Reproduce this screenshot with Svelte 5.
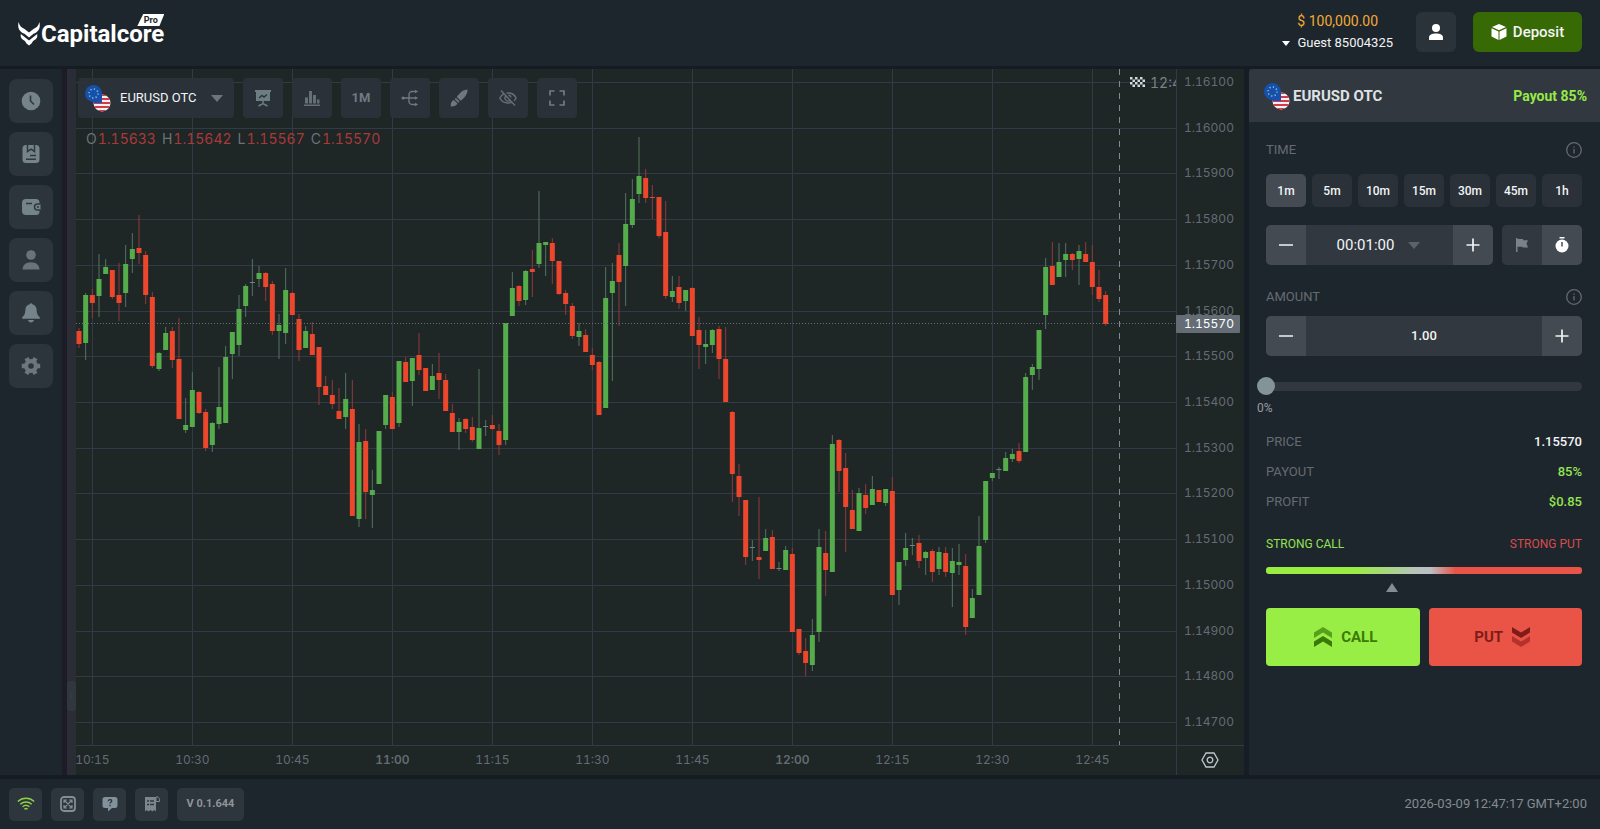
<!-- Trading terminal: chart, tools and order panel -->
<script lang="ts">
    type Candle = [high: number, open: number, close: number, low: number];

    // One candle per minute from 10:13, each value measured down the price scale
    const candles: Candle[] = [
        [328, 331, 344, 348], [293, 343, 295, 360], [289, 295, 303, 318], [254, 296, 279, 317], [259, 274, 267, 274],
        [270, 270, 297, 299], [263, 295, 303, 321], [245, 293, 264, 307], [233, 259, 249, 273], [215, 248, 253, 264],
        [251, 255, 295, 304], [292, 297, 366, 368], [352, 369, 353, 371], [327, 350, 333, 350], [327, 331, 360, 368],
        [318, 359, 419, 419], [398, 430, 425, 433], [372, 427, 390, 427], [391, 392, 413, 414], [409, 412, 448, 451],
        [422, 445, 423, 452], [367, 424, 407, 429], [346, 423, 357, 423], [332, 354, 332, 379], [295, 345, 309, 356],
        [284, 306, 286, 317], [259, 283, 282, 296], [266, 279, 273, 287], [272, 273, 287, 301], [281, 284, 331, 335],
        [314, 331, 325, 359], [268, 333, 290, 344], [292, 293, 315, 315], [314, 319, 350, 361], [326, 348, 331, 348],
        [322, 334, 355, 355], [347, 347, 387, 405], [376, 386, 395, 395], [380, 395, 404, 409], [388, 411, 419, 419],
        [373, 417, 399, 429], [380, 409, 516, 516], [424, 519, 442, 527], [429, 441, 492, 519], [470, 495, 490, 528],
        [431, 484, 431, 484], [395, 425, 395, 429], [392, 397, 429, 429], [361, 423, 361, 427], [357, 362, 382, 382],
        [358, 381, 358, 406], [333, 355, 370, 375], [368, 368, 391, 391], [364, 390, 376, 390], [353, 373, 380, 399],
        [374, 380, 411, 411], [404, 413, 432, 432], [418, 432, 422, 450], [418, 419, 429, 433], [417, 427, 440, 442],
        [369, 449, 428, 449], [420, 427, 426, 436], [415, 425, 429, 430], [424, 431, 445, 455], [323, 440, 323, 445],
        [272, 316, 288, 316], [285, 286, 301, 306], [270, 300, 271, 305], [250, 269, 272, 297], [191, 264, 243, 268],
        [242, 245, 242, 276], [238, 243, 261, 284], [261, 261, 294, 295], [290, 293, 304, 315], [303, 306, 336, 339],
        [323, 337, 331, 346], [329, 335, 352, 352], [348, 355, 365, 370], [361, 362, 415, 415], [267, 408, 298, 408],
        [263, 293, 281, 381], [243, 255, 282, 326], [193, 266, 224, 306], [179, 225, 199, 228], [137, 194, 176, 203],
        [169, 178, 198, 203], [185, 197, 198, 219], [197, 197, 236, 238], [201, 232, 296, 299], [276, 297, 291, 302],
        [276, 287, 303, 309], [290, 301, 290, 311], [287, 288, 336, 336], [317, 330, 345, 369], [330, 347, 344, 364],
        [329, 345, 330, 353], [326, 329, 359, 379], [327, 359, 402, 402], [411, 412, 474, 502], [464, 476, 497, 516],
        [500, 500, 557, 565], [540, 548, 547, 561], [497, 557, 560, 579], [529, 551, 538, 551], [530, 537, 569, 569],
        [562, 569, 568, 571], [546, 570, 550, 570], [548, 554, 632, 632], [629, 629, 653, 655], [638, 651, 663, 676],
        [619, 665, 635, 671], [529, 632, 547, 642], [531, 553, 570, 596], [435, 572, 444, 572], [439, 440, 471, 492],
        [453, 468, 507, 552], [490, 510, 529, 529], [488, 531, 493, 531], [484, 495, 508, 514], [476, 505, 489, 505],
        [490, 490, 502, 502], [489, 503, 489, 506], [477, 491, 595, 595], [562, 590, 562, 605], [533, 560, 548, 566],
        [538, 546, 545, 555], [535, 543, 561, 568], [551, 558, 552, 575], [549, 551, 572, 582], [547, 569, 552, 575],
        [547, 553, 572, 577], [548, 573, 561, 607], [544, 565, 562, 575], [554, 566, 627, 635], [589, 618, 598, 618],
        [516, 595, 546, 595], [481, 540, 481, 543], [473, 478, 473, 481], [467, 470, 469, 479], [452, 471, 458, 471],
        [449, 459, 454, 462], [443, 451, 461, 463], [373, 452, 377, 452], [364, 375, 367, 390], [330, 369, 330, 380],
        [258, 315, 267, 329], [242, 266, 285, 285], [243, 277, 262, 277], [243, 260, 254, 277], [253, 254, 260, 270],
        [245, 259, 251, 285], [242, 254, 262, 262], [245, 262, 287, 295], [270, 287, 299, 302], [291, 295, 324, 326]
    ];

    const prices = Array.from({ length: 15 }, (_, i) => ({
        label: (1.161 - i * 0.001).toFixed(5),
        level: 82 + (i * 640) / 14
    }));

    const hours = ['10:15', '10:30', '10:45', '11:00', '11:15', '11:30', '11:45', '12:00', '12:15', '12:30', '12:45'];
    const durations = ['1m', '5m', '10m', '15m', '30m', '45m', '1h'];
    const ohlc = [['O', '1.15633'], ['H', '1.15642'], ['L', '1.15567'], ['C', '1.15570']];

    const AXIS_WIDTH = 68;
    const AXIS_HEIGHT = 30;
    const STEP = 20 / 3;

    let width = $state(1168);
    let height = $state(706);
    let duration = $state('1m');
    let time = $state('00:01:00');
    let amount = $state('1.00');
    let percent = $state(0);
    let mode = $state('timer');

    let plotWidth = $derived(width - AXIS_WIDTH);
    let plotHeight = $derived(height - AXIS_HEIGHT);

    // The newest candle stays at a fixed distance from the price axis
    const x = (index: number) => plotWidth - 1097 + index * STEP;
    const y = (level: number) => ((level - 69) * plotHeight) / 676;

    function changeAmount(delta: number) {
        amount = Math.max(1, Number(amount) + delta).toFixed(2);
    }

    function changeTime(delta: number) {
        const [h, m] = time.split(':').map(Number);
        const total = Math.max(1, h * 60 + m + delta);
        const pad = (n: number) => String(n).padStart(2, '0');
        time = `${pad(Math.floor(total / 60))}:${pad(total % 60)}:00`;
    }
</script>

{#snippet flags()}
    <svg class="flags" viewBox="0 0 28 28" width="28" height="28" aria-hidden="true">
        <clipPath id="us"><circle cx="18" cy="19" r="8.5" /></clipPath>
        <g clip-path="url(#us)">
            <rect x="9" y="10" width="18" height="18" fill="#eef0f2" />
            {#each [10, 14, 18, 22, 26] as top}
                <rect x="9" y={top} width="18" height="2" fill="#d23a48" />
            {/each}
            <rect x="9" y="10" width="9" height="9" fill="#1c4fb0" />
        </g>
        <circle cx="9.5" cy="9.5" r="8.5" fill="#1550ad" />
        <circle cx="9.5" cy="9.5" r="4.5" fill="none" stroke="#9cc4b8" stroke-width="1.5" stroke-dasharray="1.2 2.3" />
    </svg>
{/snippet}

{#snippet info()}
    <svg viewBox="0 0 16 16" width="16" height="16" fill="none" stroke="#646a71" stroke-width="1.3">
        <circle cx="8" cy="8" r="7.3" />
        <path d="M8 7v4.500M8 4.400v1.300" />
    </svg>
{/snippet}

{#snippet minus()}
    <svg viewBox="0 0 14 14" width="14" height="14" stroke="#f2f4f5" stroke-width="1.7"><path d="M0 7h14" /></svg>
{/snippet}

{#snippet plus()}
    <svg viewBox="0 0 14 14" width="14" height="14" stroke="#f2f4f5" stroke-width="1.7"><path d="M.5 7h13M7 .5v13" /></svg>
{/snippet}

<div class="app">
    <header class="topbar">
        <a class="logo" href="/" aria-label="Capitalcore Pro">
            <svg viewBox="0 0 22 24" width="22" height="24" fill="#fff" aria-hidden="true">
                <path d="M.6 0C-.8 6 1.500 10 6.500 11.800L11 15.600l4.500-3.800C20.500 10 22.800 6 21.400 0c-.8 4-3 5.800-5.600 6.700L11 10.600 6.200 6.700C3.600 5.800 1.400 4 .6 0z" />
                <path d="M2.800 12L11 18.500 19.200 12c.4 2.300-.2 4.300-1.500 5.300l-2.600 1.600-1.600 2.700L11 23.500l-2.500-1.900-1.600-2.700-2.600-1.600C3 16.300 2.400 14.300 2.800 12z" />
            </svg>
            <span class="brand">Capitalcore</span>
            <span class="pro">Pro</span>
        </a>
        <div class="account">
            <button class="balance">
                <span class="money">$ 100,000.00</span>
                <span class="guest">
                    <svg viewBox="0 0 8 5" width="8" height="5" fill="#fff"><path d="M0 0h8L4 5z" /></svg>
                    Guest 85004325
                </span>
            </button>
            <button class="profile" aria-label="Profile">
                <svg viewBox="0 0 14 16" width="14" height="16" fill="#fff">
                    <circle cx="7" cy="4" r="4" />
                    <path d="M0 16v-2.500C0 11 3 9.600 7 9.600s7 1.400 7 3.900V16z" />
                </svg>
            </button>
            <button class="deposit">
                <svg viewBox="0 0 16 16" width="16" height="16" fill="#fff">
                    <path d="M8 0l7 3-7 3.200L1 3zM.5 4.200l7 3.200V16l-7-3.400zM15.500 4.200l-7 3.200V16l7-3.400z" />
                </svg>
                Deposit
            </button>
        </div>
    </header>

    <div class="workspace">
        <nav class="rail" aria-label="Main">
            <button aria-label="History">
                <svg viewBox="0 0 20 20" width="20" height="20">
                    <circle cx="10" cy="10" r="9.3" fill="#75838a" />
                    <path d="M9.500 4.500V10l3.500 3.500" fill="none" stroke="#30383f" stroke-width="1.6" />
                </svg>
            </button>
            <button aria-label="Orders">
                <svg viewBox="0 0 20 20" width="20" height="20">
                    <path d="M5 1h10a3.500 3.500 0 013.500 3.500v11A3.500 3.500 0 0115 19H5a3.500 3.500 0 01-3.500-3.500v-11A3.500 3.500 0 015 1z" fill="#75838a" />
                    <path d="M6.500 0v7.500L10 5.200l3.500 2.300V0M9 11.500h6M5 15.300h10" fill="none" stroke="#30383f" stroke-width="1.5" />
                </svg>
            </button>
            <button aria-label="Wallet">
                <svg viewBox="0 0 20 20" width="20" height="20">
                    <path d="M5 2h10a3.500 3.500 0 013.500 3.500v9A3.500 3.500 0 0115 18H5a4 4 0 01-4-4V6a4 4 0 014-4z" fill="#75838a" />
                    <path d="M5 6.500h6" stroke="#30383f" stroke-width="1.5" />
                    <path d="M19.500 7h-3a3 3 0 000 6h3" fill="#75838a" stroke="#30383f" stroke-width="1.5" />
                    <circle cx="17" cy="10" r="1" fill="#30383f" />
                </svg>
            </button>
            <button aria-label="Account">
                <svg viewBox="0 0 20 20" width="20" height="20" fill="#69737b">
                    <circle cx="10" cy="5" r="4.8" />
                    <path d="M1.500 19.500c0-4.500 3.500-7.300 8.500-7.300s8.500 2.800 8.500 7.300z" />
                </svg>
            </button>
            <button aria-label="Notifications">
                <svg viewBox="0 0 20 20" width="20" height="20" fill="#75838a">
                    <path d="M8.700 1.200a1.400 1.400 0 012.600 0c2.700.6 4.300 2.600 4.300 5.500 0 4 1.500 6 3.200 7.600v1.500H1.200v-1.500c1.700-1.600 3.200-3.600 3.200-7.600 0-2.900 1.600-4.900 4.300-5.500zM7 17h6c-.4 1.500-1.500 2.500-3 2.500S7.400 18.500 7 17z" />
                </svg>
            </button>
            <button aria-label="Settings">
                <svg viewBox="0 0 20 20" width="20" height="20" fill="none" stroke="#6d767d">
                    <circle cx="10" cy="10" r="4.9" stroke-width="4.2" />
                    <path d="M19.200 10H15M14.600 17.970l-2.100-3.640M5.400 17.970l2.100-3.640M.8 10H5M5.400 2.030l2.100 3.640M14.600 2.030l-2.100 3.640" stroke-width="4.4" />
                </svg>
            </button>
        </nav>

        <div class="divider">
            <button class="handle" aria-label="Expand panel">›</button>
        </div>

        <main class="chart" bind:clientWidth={width} bind:clientHeight={height}>
            <svg class="plot" {width} {height} role="img" aria-label="EURUSD OTC one minute chart">
                <clipPath id="plot-area"><rect width={plotWidth} height={plotHeight} /></clipPath>
                <clipPath id="time-area"><rect width={plotWidth} {height} /></clipPath>

                <g clip-path="url(#plot-area)">
                    {#each prices as price}
                        <line class="grid" x1="0" x2={plotWidth} y1={Math.round(y(price.level)) + 0.5} y2={Math.round(y(price.level)) + 0.5} />
                    {/each}
                    {#each hours as hour, i}
                        <line class="grid" x1={Math.round(x(2 + i * 15)) + 0.5} x2={Math.round(x(2 + i * 15)) + 0.5} y1="0" y2={plotHeight} />
                    {/each}
                    {#each candles as [high, open, close, low], i}
                        {@const up = close < open}
                        <line class={up ? 'wick-up' : 'wick-down'} x1={x(i)} x2={x(i)} y1={y(high)} y2={y(low)} />
                        <rect
                            class={Math.abs(open - close) === 1 && up ? 'doji' : up ? 'up' : 'down'}
                            x={x(i) - 2.5}
                            y={y(Math.min(open, close))}
                            width="5"
                            height={Math.max(1, Math.abs(y(open) - y(close)))}
                        />
                    {/each}
                    <line class="last" x1="0" x2={plotWidth} y1={y(324) - 0.5} y2={y(324) - 0.5} />
                    <line class="expiry" x1={x(156) + 0.5} x2={x(156) + 0.5} y1="0" y2={plotHeight} />
                    <g transform="translate({x(156) + 11} 8)">
                        <path d="M0 0l4 1 5-1 6 1v9l-5-1-5 1-5-1z" fill="#20282a" />
                        {#each [0, 1, 2, 3] as row}
                            {#each [0, 1, 2] as col}
                                <rect x={col * 5 + (row % 2) * 2.5} y={row * 2.5} width="2.5" height="2.5" fill="#d5d8da" />
                            {/each}
                        {/each}
                    </g>
                    <text class="expiry-label" x={x(156) + 31} y="19">12:48</text>
                </g>

                <path class="axis" d="M0 {plotHeight + 0.5}H{width}M{plotWidth + 0.5} 0V{height}" />

                {#each prices as price}
                    <text class="label" x={plotWidth + 8} y={y(price.level) + 4}>{price.label}</text>
                {/each}
                <g clip-path="url(#time-area)">
                    {#each hours as hour, i}
                        <text class="label hour" class:strong={hour.endsWith('00')} x={x(2 + i * 15)} y={plotHeight + 19}>{hour}</text>
                    {/each}
                </g>

                <rect x={plotWidth} y={y(324) - 9} width="64" height="18" rx="1" fill="#646d75" />
                <text class="label current" x={plotWidth + 8} y={y(324) + 4}>1.15570</text>

                <g transform="translate({plotWidth + 34} {plotHeight + 15})" fill="none" stroke="#c3c7ca" stroke-width="1.3">
                    <path d="M-4 -7h8l4 7-4 7h-8l-4-7z" />
                    <circle r="2.8" />
                </g>
            </svg>

            <div class="overlay">
                <div class="toolbar">
                    <button class="symbol">
                        {@render flags()}
                        <span>EURUSD OTC</span>
                        <svg viewBox="0 0 12 7" width="12" height="7" fill="#6c757c"><path d="M0 0h12L6 7z" /></svg>
                    </button>
                    <button aria-label="Indicators">
                        <svg viewBox="0 0 18 18" width="18" height="18">
                            <path d="M1 1h16v2h-1v9H2V3H1z" fill="#6c7e82" />
                            <path d="M5 9l3-2.500L10 8l3-2.500" fill="none" stroke="#2b333a" stroke-width="1.4" />
                            <path d="M9 12v3M4.500 17L9 14.500l4.500 2.500" fill="none" stroke="#6c7e82" stroke-width="1.5" />
                        </svg>
                    </button>
                    <button aria-label="Chart type">
                        <svg viewBox="0 0 16 16" width="16" height="16" fill="#656f76">
                            <path d="M0 14.500h16V16H0zM1 7.500h3v6H1zM5 1h3v12.500H5zM9 5h3v8.500H9zM13 9.500h2.500v4H13z" />
                        </svg>
                    </button>
                    <button class="interval">1M</button>
                    <button aria-label="Compare">
                        <svg viewBox="0 0 18 18" width="18" height="18" fill="none" stroke="#6f787e" stroke-width="1.4">
                            <path d="M2 9h13M15 2.500h-4a3 3 0 00-3 3v7a3 3 0 003 3h4" />
                            <path d="M.5 9a1.600 1.600 0 103.200 0A1.600 1.600 0 00.5 9M14 .7l3.200 1.800L14 4.300zM14 7.200L17.200 9 14 10.800zM14 13.700l3.200 1.800-3.200 1.800z" fill="#6f787e" stroke="none" />
                        </svg>
                    </button>
                    <button aria-label="Draw">
                        <svg viewBox="0 0 18 18" width="18" height="18" fill="#6f787e">
                            <path d="M17.500.5c.3 4.500-3 8.500-7 11.200L6.800 8C9.500 4 13 .6 17.500.5zM6 8.900l3.600 3.600-1.300 1.300-3.700-3.700zM3.900 11l3.600 3.600c-.8 2.300-3.600 3-6.800 2.900C.6 14.300 1.300 12 3.900 11z" />
                        </svg>
                    </button>
                    <button aria-label="Hide drawings">
                        <svg viewBox="0 0 18 18" width="18" height="18" fill="none" stroke="#667076" stroke-width="1.4">
                            <path d="M5.200 4.600C3.200 5.700 1.700 7.300.8 9c1.600 3.100 4.600 5 8.200 5 1.200 0 2.400-.2 3.500-.7M7.400 4.100C11.600 3.400 15.400 5.600 17.200 9c-.5 1-1.200 1.900-2.100 2.700M6.600 7.200A3 3 0 0010.800 11.400M9.500 6c1.400.3 2.300 1.200 2.500 2.500M2 1.500l14 15" />
                        </svg>
                    </button>
                    <button aria-label="Full screen">
                        <svg viewBox="0 0 16 16" width="16" height="16" fill="none" stroke="#727b81" stroke-width="1.7">
                            <path d="M1 5.500V1h4.500M10.500 1H15v4.500M15 10.500V15h-4.500M5.500 15H1v-4.500" />
                        </svg>
                    </button>
                </div>
                <div class="ohlc">
                    {#each ohlc as [name, value]}
                        <span>{name}<b>{value}</b></span>
                    {/each}
                </div>
            </div>
        </main>

        <aside class="panel">
            <div class="panel-head">
                {@render flags()}
                <h2>EURUSD OTC</h2>
                <span class="payout">Payout 85%</span>
            </div>
            <div class="panel-body">
                <div class="caption">
                    <label for="time">TIME</label>
                    {@render info()}
                </div>
                <div class="durations">
                    {#each durations as item}
                        <button class:active={duration === item} onclick={() => (duration = item)}>{item}</button>
                    {/each}
                </div>
                <div class="time-row">
                    <div class="stepper">
                        <button aria-label="Less time" onclick={() => changeTime(-1)}>{@render minus()}</button>
                        <div class="time-value">
                            <input id="time" type="text" bind:value={time} />
                            <svg viewBox="0 0 12 7" width="12" height="7" fill="#5b6369"><path d="M0 0h12L6 7z" /></svg>
                        </div>
                        <button aria-label="More time" onclick={() => changeTime(1)}>{@render plus()}</button>
                    </div>
                    <div class="stepper mode">
                        <button class:off={mode !== 'flag'} aria-label="Fixed time" onclick={() => (mode = 'flag')}>
                            <svg viewBox="0 0 12 14" width="12" height="14" fill="#7b8288">
                                <path d="M0 0h1.500v14H0zM1.500 1H7v1.200h5L10.500 5.600 12 9.500H6.500V8.700h-5z" />
                            </svg>
                        </button>
                        <button class:off={mode !== 'timer'} aria-label="Timer" onclick={() => (mode = 'timer')}>
                            <svg viewBox="0 0 14 16" width="14" height="16">
                                <path d="M4.500 0h5v1.500h-5z" fill="#fff" />
                                <circle cx="7" cy="9" r="6.5" fill="#fff" />
                                <path d="M7 5v4.500" stroke="#454d54" stroke-width="1.5" />
                            </svg>
                        </button>
                    </div>
                </div>
                <div class="caption amount">
                    <label for="amount">AMOUNT</label>
                    {@render info()}
                </div>
                <div class="stepper">
                    <button aria-label="Lower amount" onclick={() => changeAmount(-1)}>{@render minus()}</button>
                    <input id="amount" type="text" bind:value={amount} />
                    <button aria-label="Raise amount" onclick={() => changeAmount(1)}>{@render plus()}</button>
                </div>
                <div class="slider">
                    <input id="percent" type="range" min="0" max="100" bind:value={percent} />
                    <label for="percent">{percent}%</label>
                </div>
                <dl>
                    <div><dt>PRICE</dt><dd class="white">1.15570</dd></div>
                    <div><dt>PAYOUT</dt><dd>85%</dd></div>
                    <div><dt>PROFIT</dt><dd>$0.85</dd></div>
                </dl>
                <div class="signal">
                    <span class="call-text">STRONG CALL</span>
                    <span class="put-text">STRONG PUT</span>
                </div>
                <div class="meter"></div>
                <div class="pointer" style="padding-left: 40%">
                    <svg viewBox="0 0 12 9" width="12" height="9" fill="#858c93"><path d="M6 0l6 9H0z" /></svg>
                </div>
                <div class="actions">
                    <button class="call">
                        <svg viewBox="0 0 18 20" width="18" height="20">
                            <path d="M9 0l9 5.500V11L9 5.500 0 11V5.500z" fill="#58a01b" />
                            <path d="M9 9l9 5.500V20l-9-5.500L0 20v-5.500z" fill="#3c7a08" />
                        </svg>
                        CALL
                    </button>
                    <button class="put">
                        PUT
                        <svg viewBox="0 0 18 20" width="18" height="20">
                            <path d="M9 20l9-5.500V9l-9 5.500L0 9v5.500z" fill="#b5322c" />
                            <path d="M9 11l9-5.500V0L9 5.500 0 0v5.500z" fill="#7f1c19" />
                        </svg>
                    </button>
                </div>
            </div>
        </aside>
    </div>

    <footer class="statusbar">
        <button aria-label="Connection">
            <svg viewBox="0 0 18 14" width="18" height="14" fill="none" stroke="#8fd24a" stroke-width="1.4">
                <path d="M.8 4.500C5.500.2 12.500.2 17.200 4.500M3.300 7.200c3.300-3 8.100-3 11.400 0M5.600 9.800c2-1.800 4.800-1.800 6.800 0M7.400 12.300c1-.9 2.200-.9 3.200 0" />
            </svg>
        </button>
        <button aria-label="Fit to screen">
            <svg viewBox="0 0 16 16" width="16" height="16" fill="none" stroke="#848d93" stroke-width="1.8">
                <rect x="1" y="1" width="14" height="14" rx="3" />
                <path d="M4.500 4.500l7 7M11.500 4.500l-7 7M4 7V4h3M9 4h3v3M12 9v3H9M7 12H4V9" stroke-width="1.2" />
            </svg>
        </button>
        <button aria-label="Support">
            <svg viewBox="0 0 16 16" width="16" height="16">
                <path d="M3 1h10a2.500 2.500 0 012.500 2.500v6A2.500 2.500 0 0113 12h-3l-4 3.500V12H3A2.500 2.500 0 01.5 9.500v-6A2.500 2.500 0 013 1z" fill="#82919a" />
                <path d="M6.300 5.200C6.300 3 9.700 3 9.700 5c0 1.200-1.700 1.300-1.700 2.600M8 8.800v1.400" fill="none" stroke="#2f3840" stroke-width="1.3" />
            </svg>
        </button>
        <button aria-label="News">
            <svg viewBox="0 0 16 16" width="16" height="16">
                <path d="M1 1h11v14.500l-1.800-1.500-1.800 1.500L6.500 14l-1.900 1.500L2.800 14 1 15.500z" fill="#7d868c" />
                <path d="M3 5h2M6 5h4M3 8.500h2M6 8.500h4" stroke="#30383f" stroke-width="1.3" />
                <path d="M12 1a2 2 0 012 0c1.500.8 1.500 2 1.500 4.500H12z" fill="#30383f" stroke="#7d868c" />
            </svg>
        </button>
        <button class="version">V 0.1.644</button>
        <time>2026-03-09 12:47:17 GMT+2:00</time>
    </footer>
</div>

<style>
    :global(body) {
        margin: 0;
        background: #1e262d;
    }

    .app {
        display: flex;
        flex-direction: column;
        min-height: 100vh;
        font: 13px/16px Roboto, "Liberation Sans", sans-serif;
        color: #f2f4f5;
    }

    button, input {
        font: inherit;
        color: inherit;
        border: 0;
        margin: 0;
        padding: 0;
        background: none;
        box-sizing: border-box;
    }

    button {
        display: flex;
        align-items: center;
        justify-content: center;
        cursor: pointer;
    }

    svg {
        display: block;
        flex: none;
    }

    /* Top bar */
    .topbar {
        display: flex;
        justify-content: space-between;
        height: 66px;
        border-bottom: 3px solid #161c23;
        padding: 0 18px;
    }

    .logo {
        position: relative;
        display: flex;
        align-items: center;
        align-self: flex-start;
        margin-top: 20px;
        gap: 1px;
        color: #fff;
        text-decoration: none;
    }

    .brand {
        font-size: 24px;
        line-height: 28px;
        font-weight: 700;
    }

    .pro {
        position: absolute;
        right: 0;
        top: -6px;
        width: 27px;
        height: 12px;
        clip-path: polygon(22% 0, 100% 0, 82% 100%, 0 100%);
        background: #fff;
        color: #1e262d;
        font-size: 9px;
        line-height: 12px;
        font-weight: 700;
        text-align: center;
    }

    .account {
        display: flex;
        align-items: flex-start;
        padding-top: 12px;
    }

    .balance {
        flex-direction: column;
        gap: 5px;
        margin-right: 23px;
    }

    .money {
        font-size: 14px;
        line-height: 18px;
        color: #f3a936;
    }

    .guest {
        display: flex;
        align-items: center;
        gap: 7px;
    }

    .profile {
        width: 40px;
        height: 40px;
        margin-right: 17px;
        border-radius: 6px;
        background: #2a323a;
    }

    .deposit {
        gap: 6px;
        width: 109px;
        height: 40px;
        border-radius: 6px;
        background: #376a04;
        font-size: 15px;
        font-weight: 500;
    }

    /* Side rail */
    .workspace {
        display: flex;
        flex: 1;
    }

    .rail {
        display: flex;
        flex-direction: column;
        gap: 9px;
        padding: 10px 9px;
    }

    .rail button {
        width: 44px;
        height: 44px;
        border-radius: 8px;
        background: #2c343c;
    }

    .divider {
        display: flex;
        align-items: flex-end;
        width: 9px;
        border-left: 5px solid #1d1c26;
        background: #2a2d36;
    }

    .handle {
        width: 9px;
        height: 30px;
        margin-bottom: 64px;
        border-radius: 3px;
        background: #30373f;
        font-size: 10px;
        color: #3d454c;
    }

    /* Chart */
    .chart {
        position: relative;
        flex: 1;
        min-width: 0;
        background: #1e2626;
        font-family: Inter, "Liberation Sans", sans-serif;
        font-variant-numeric: tabular-nums;
    }

    .plot {
        position: absolute;
        inset: 0;
    }

    .grid {
        stroke: #323a48;
    }

    .axis {
        fill: none;
        stroke: #323a48;
    }

    .up {
        fill: #55ac4b;
    }

    .down {
        fill: #ec472d;
    }

    .doji {
        fill: #708487;
    }

    .wick-up {
        stroke: #547460;
    }

    .wick-down {
        stroke: #8f3a3c;
    }

    .last {
        stroke: #68717a;
        stroke-dasharray: 1 2;
    }

    .expiry {
        stroke: #838b90;
        stroke-dasharray: 6 6;
    }

    .label {
        fill: #666b73;
        font-size: 12px;
    }

    .current {
        fill: #fff;
    }

    .hour {
        text-anchor: middle;
    }

    .strong {
        font-weight: 600;
    }

    .expiry-label {
        fill: #7b8287;
        font-size: 14px;
    }

    .overlay {
        position: relative;
        padding: 9px 2px;
    }

    .toolbar {
        display: flex;
        gap: 9px;
        font-family: Roboto, "Liberation Sans", sans-serif;
    }

    .toolbar button {
        width: 40px;
        height: 40px;
        border-radius: 4px;
        background: rgba(43, 50, 58, 0.95);
    }

    .toolbar .symbol {
        width: 156px;
        justify-content: flex-start;
        padding: 0 10px 0 6px;
    }

    .symbol span {
        margin: 0 14px 0 8px;
    }

    .toolbar .interval {
        font-weight: 700;
        color: #727a81;
    }

    .ohlc {
        display: flex;
        gap: 6px;
        margin-top: 13px;
        padding-left: 8px;
        font-size: 14px;
        color: #6c7277;
    }

    .ohlc b {
        margin-left: 1px;
        font-weight: 400;
        color: #a83a3a;
    }

    /* Order panel */
    .panel {
        width: 351px;
        border-left: 5px solid #161d25;
    }

    .panel-head {
        display: flex;
        align-items: center;
        height: 53px;
        padding: 0 13px 0 14px;
        border-radius: 4px 0 0 0;
        background: #31383f;
        box-sizing: border-box;
    }

    h2 {
        flex: 1;
        margin: 0 0 0 2px;
        font-size: 15px;
        font-weight: 700;
        color: #dfe2e4;
    }

    .payout {
        font-size: 14px;
        font-weight: 700;
        color: #95ea48;
    }

    .panel-body {
        padding: 20px 18px 20px 17px;
    }

    .caption {
        display: flex;
        align-items: center;
        justify-content: space-between;
        color: #656b71;
    }

    .durations {
        display: grid;
        grid-template-columns: repeat(7, 1fr);
        gap: 6px;
        margin: 16px 0 18px;
    }

    .durations button {
        height: 33px;
        border-radius: 5px;
        background: #2a3138;
        font-size: 12px;
        font-weight: 500;
    }

    .durations .active {
        background: #444b53;
    }

    .time-row {
        display: flex;
        gap: 9px;
    }

    .stepper {
        display: flex;
        flex: 1;
        height: 40px;
        border-radius: 5px;
        overflow: hidden;
        background: #31383f;
    }

    .stepper button {
        width: 40px;
        height: 40px;
        background: #434a52;
    }

    .stepper button.off {
        background: #31383f;
    }

    .stepper input {
        flex: 1;
        min-width: 0;
        text-align: center;
        font-weight: 500;
    }

    .mode {
        flex: none;
    }

    .time-value {
        display: flex;
        flex: 1;
        align-items: center;
        justify-content: center;
        gap: 12px;
        padding-right: 4px;
    }

    .time-value input {
        flex: none;
        width: 60px;
        font-size: 15px;
        font-weight: 400;
    }

    .amount {
        margin: 24px 0 11px;
    }

    .slider {
        margin: 21px 0 11px -9px;
    }

    .slider label {
        display: block;
        margin-top: 5px;
        font-size: 12px;
        color: #969da3;
    }

    .slider input {
        display: block;
        width: 100%;
        height: 18px;
        appearance: none;
    }

    .slider input::-webkit-slider-runnable-track {
        height: 9px;
        border-radius: 5px;
        background: linear-gradient(to right, transparent 9px, #31383f 9px);
    }

    .slider input::-webkit-slider-thumb {
        appearance: none;
        width: 18px;
        height: 18px;
        margin-top: -5px;
        border-radius: 50%;
        background: #84929a;
    }

    dl {
        margin: 0;
    }

    dl div {
        display: flex;
        justify-content: space-between;
        line-height: 30px;
    }

    dt {
        color: #656b71;
    }

    dd {
        margin: 0;
        font-weight: 500;
        color: #95e352;
    }

    dd.white {
        color: #f2f4f5;
    }

    .signal {
        display: flex;
        justify-content: space-between;
        margin: 19px 0 15px;
        font-size: 12px;
    }

    .call-text {
        color: #95e352;
    }

    .put-text {
        color: #d84b4b;
    }

    .meter {
        height: 7px;
        border-radius: 3px;
        background: linear-gradient(to right, #99ec42 28%, #b7c3bd 48%, #b9bfc2 52%, #ea5347 60%);
    }

    .pointer {
        margin: 9px 0 16px -6px;
    }

    .actions {
        display: grid;
        grid-template-columns: 1fr 1fr;
        gap: 9px;
    }

    .actions button {
        gap: 9px;
        height: 58px;
        border-radius: 4px;
        font-size: 15px;
        font-weight: 700;
    }

    .actions .call {
        padding-left: 6px;
        background: #98ee45;
        color: #3c7a08;
    }

    .actions .put {
        padding-right: 6px;
        background: #ea5446;
        color: #7f1c19;
    }

    /* Status bar */
    .statusbar {
        display: flex;
        align-items: center;
        gap: 9px;
        height: 50px;
        padding: 0 13px 0 9px;
        border-top: 4px solid #161c23;
    }

    .statusbar button {
        width: 33px;
        height: 33px;
        border-radius: 5px;
        background: #2d353d;
    }

    .statusbar .version {
        width: 67px;
        font-size: 11px;
        font-weight: 700;
        color: #8d949a;
    }

    time {
        margin-left: auto;
        color: #848b91;
    }
</style>
